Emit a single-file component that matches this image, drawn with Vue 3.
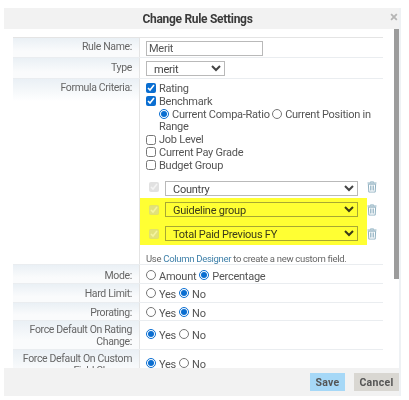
<template>
  <div class="page">
    <div class="dialog">
      <header class="head">
        <h1>Change Rule Settings</h1>
        <span class="close">×</span>
      </header>

      <div class="body">
        <div class="table">
          <div class="row r-name">
            <label class="lbl">Rule Name:</label>
            <div class="val"><input class="name" value="Merit" /></div>
          </div>
          <div class="row r-type">
            <label class="lbl">Type</label>
            <div class="val">
              <select class="type"><option>merit</option></select>
            </div>
          </div>
          <div class="row r-formula">
            <label class="lbl">Formula Criteria:</label>
            <div class="val criteria">
              <div v-for="c in topCriteria" :key="c.label" class="check">
                <input type="checkbox" :checked="c.on" />{{ c.label }}
              </div>
              <div class="sub">
                <input type="radio" name="bm" checked />Current Compa-Ratio
                <input type="radio" name="bm" />Current Position in Range
              </div>
              <div v-for="c in lowerCriteria" :key="c" class="check">
                <input type="checkbox" />{{ c }}
              </div>

              <div class="fields">
                <div class="field plain">
                  <input type="checkbox" checked disabled />
                  <select><option>Country</option></select>
                  <svg class="trash" viewBox="0 0 12 14"><use href="#bin" /></svg>
                </div>
                <div class="marked">
                  <div v-for="f in markedFields" :key="f" class="field">
                    <input type="checkbox" checked disabled />
                    <select><option>{{ f }}</option></select>
                    <svg class="trash" viewBox="0 0 12 14"><use href="#bin" /></svg>
                  </div>
                </div>
              </div>
              <p class="hint">Use <a>Column Designer</a> to create a new custom field.</p>
            </div>
          </div>

          <div v-for="r in radioRows" :key="r.label" class="row" :class="r.cls">
            <label class="lbl">{{ r.label }}</label>
            <div class="val radios">
              <template v-for="(o, i) in r.options" :key="o">
                <input type="radio" :name="r.label" :checked="i === r.picked" />
                <span class="opt">{{ o }}</span>
              </template>
            </div>
          </div>
        </div>
      </div>

      <footer class="foot">
        <button class="save">Save</button>
        <button class="cancel">Cancel</button>
      </footer>
    </div>

    <svg width="0" height="0" class="defs">
      <symbol id="bin" viewBox="0 0 12 14">
        <path d="M4.2 1.6V.7h3.6v.9M.6 2.2h10.8M1.6 3.6l.6 9.6h7.6l.6-9.6z" fill="none" stroke="currentColor" stroke-width="1.2" />
        <path d="M4.2 5.2v6M6 5.2v6M7.8 5.2v6" fill="none" stroke="currentColor" stroke-width="1" />
      </symbol>
    </svg>
  </div>
</template>

<script setup>
const topCriteria = [
  { label: 'Rating', on: true },
  { label: 'Benchmark', on: true },
]
const lowerCriteria = ['Job Level', 'Current Pay Grade', 'Budget Group']
const markedFields = ['Guideline group', 'Total Paid Previous FY']

const yesNo = ['Yes', 'No']
const radioRows = [
  { label: 'Mode:', options: ['Amount', 'Percentage'], picked: 1, cls: 'r-mode' },
  { label: 'Hard Limit:', options: yesNo, picked: 1, cls: 'r-small' },
  { label: 'Prorating:', options: yesNo, picked: 1, cls: 'r-pror' },
  { label: 'Force Default On Rating Change:', options: yesNo, picked: 0, cls: 'r-tall' },
  { label: 'Force Default On Custom Field Change:', options: yesNo, picked: 0, cls: 'r-tall' },
]
</script>

<style>
html,
body {
  margin: 0;
  background: #fff;
}
</style>

<style scoped>
.page {
  width: 409px;
  height: 400px;
  box-sizing: border-box;
  padding: 8px 10px 4px 4px;
  overflow: hidden;
  background: #fff;
  font-family: Roboto, "Liberation Sans", sans-serif;
  filter: blur(0.45px);
}
.defs {
  position: absolute;
}
.dialog {
  height: 388px;
  display: flex;
  flex-direction: column;
  box-shadow: 2px 0 0 #eef1f4;
}
.head {
  height: 21px;
  flex: none;
  display: flex;
  align-items: center;
  justify-content: center;
  position: relative;
  background: #f2f2f2;
}
.head h1 {
  margin: 0 8px 0 0;
  font-size: 12px;
  letter-spacing: -0.3px;
  font-weight: 700;
  color: #3a3a3a;
}
.close {
  position: absolute;
  right: 1px;
  top: 0;
  font-size: 15px;
  line-height: 19px;
  font-weight: 700;
  color: #b5b5b5;
}
.body {
  flex: 1;
  min-height: 0;
  overflow: hidden;
  padding-left: 9px;
  background: linear-gradient(#9c9c9c, #9c9c9c) right top / 5px 250px no-repeat #fff;
}
.table {
  width: 370px;
  margin-top: 8px;
  border-top: 1px solid #e4e4e4;
}
.row {
  display: flex;
  border-bottom: 1px solid #eaedf0;
  box-sizing: border-box;
}
.row:last-child {
  border-bottom: 0;
}
.lbl {
  width: 126px;
  flex: none;
  box-sizing: border-box;
  padding: 3px 7px 0 3px;
  text-align: right;
  font-size: 10.5px;
  letter-spacing: -0.35px;
  line-height: 12px;
  color: #666;
  background: linear-gradient(#eaf0f5, #fafbfc 70%);
}
.val {
  flex: 1;
  min-width: 0;
  border-left: 1px solid #e4e4e4;
  padding-left: 6px;
  font-size: 11px;
  letter-spacing: -0.25px;
  color: #555;
}
.r-name {
  height: 20px;
}
.r-type {
  height: 21px;
}
.r-type .lbl {
  padding-top: 4px;
}
.r-formula {
  height: 186px;
}
.r-formula .lbl {
  background: linear-gradient(#eaf0f5, #fff 12%);
}
.r-mode,
.r-small {
  height: 19px;
}
.r-pror {
  height: 18px;
}
.r-mode .lbl,
.r-mode .radios {
  padding-top: 5px;
}
.r-small .lbl,
.r-small .radios,
.r-pror .lbl,
.r-pror .radios {
  padding-top: 4px;
}
.r-tall {
  height: 29px;
}
.r-tall .radios {
  padding-top: 8px;
}
.name {
  display: block;
  width: 117px;
  height: 15px;
  box-sizing: border-box;
  margin-top: 3px;
  padding: 0 2px;
  border: 1px solid #b9b9b9;
  font: inherit;
  letter-spacing: inherit;
  color: #555;
  outline: 0;
}
select {
  font: inherit;
  letter-spacing: inherit;
  color: #444;
  background-color: #fff;
  border: 1px solid #b9b9b9;
  border-radius: 0;
  outline: 0;
}
.type {
  display: block;
  width: 79px;
  height: 15px;
  margin-top: 3px;
  padding: 0 0 0 3px;
}
.criteria {
  padding-top: 4px;
  line-height: 12.8px;
}
.check {
  display: flex;
  align-items: center;
  height: 12.8px;
}
input[type='checkbox'],
input[type='radio'] {
  width: 10px;
  height: 10px;
  margin: 0 3px 2px 0;
  accent-color: #0a6ed1;
  flex: none;
  vertical-align: middle;
}
.sub {
  padding-left: 13px;
  padding-right: 4px;
}
.fields {
  margin: 8px 0 0 -6px;
}
.field {
  display: flex;
  align-items: center;
  height: 24px;
  padding-left: 9px;
  width: 245px;
  box-sizing: border-box;
}
.field.plain {
  height: 17px;
  align-items: flex-start;
}
.field input {
  margin: 1px 6px 0 0;
  opacity: 0.65;
}
.field select {
  width: 193px;
  height: 15px;
  padding: 0 0 0 3px;
  flex: none;
}
.marked {
  width: 227px;
  height: 47px;
  background: #ffff33;
}
.marked select {
  background-color: #ffff33;
  border-color: #a8a832;
  color: #3a3a1a;
}
.trash {
  width: 10px;
  height: 12px;
  margin-left: 9px;
  flex: none;
  color: #8fb0c0;
}
.hint {
  margin: 7px 0 0;
  font-size: 9.5px;
  letter-spacing: -0.3px;
  line-height: 13px;
  color: #666;
}
.hint a {
  color: #3d7fa8;
}
.radios {
  display: flex;
  align-items: flex-start;
  padding-top: 3px;
  line-height: 13px;
}
.radios input {
  margin: 0 3px 0 0;
}
.opt {
  margin-right: 3px;
}
.foot {
  height: 28px;
  flex: none;
  display: flex;
  align-items: center;
  justify-content: flex-end;
  gap: 9px;
  background: #f2f2f2;
  position: relative;
  z-index: 1;
}
.foot button {
  height: 18px;
  border: 0;
  padding: 0;
  font-family: inherit;
  font-size: 10.5px;
  font-weight: 700;
  letter-spacing: 0.3px;
  color: #555;
}
.save {
  width: 35px;
  background: #a6d8f7;
}
.cancel {
  width: 45px;
  background: #d9d7d2;
}
</style>
